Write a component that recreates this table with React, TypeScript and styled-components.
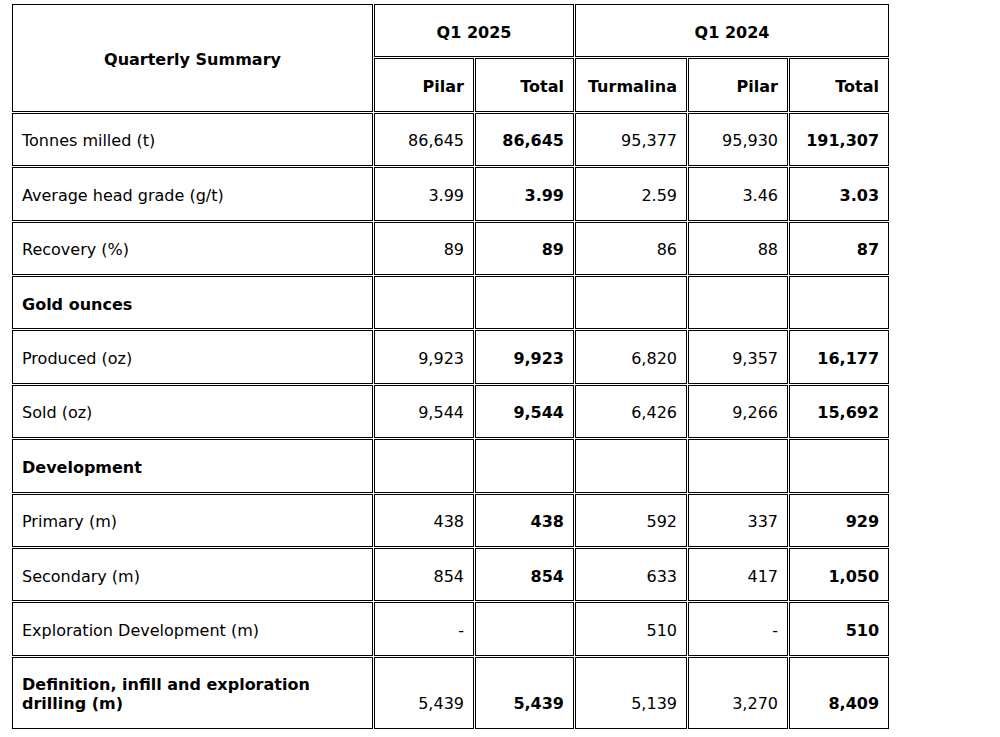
import React from "react";
import styled, { createGlobalStyle } from "styled-components";

type Row = {
  label: string;
  section?: boolean;
  values?: string[];
};

const rows: Row[] = [
  { label: "Tonnes milled (t)", values: ["86,645", "86,645", "95,377", "95,930", "191,307"] },
  { label: "Average head grade (g/t)", values: ["3.99", "3.99", "2.59", "3.46", "3.03"] },
  { label: "Recovery (%)", values: ["89", "89", "86", "88", "87"] },
  { label: "Gold ounces", section: true },
  { label: "Produced (oz)", values: ["9,923", "9,923", "6,820", "9,357", "16,177"] },
  { label: "Sold (oz)", values: ["9,544", "9,544", "6,426", "9,266", "15,692"] },
  { label: "Development", section: true },
  { label: "Primary (m)", values: ["438", "438", "592", "337", "929"] },
  { label: "Secondary (m)", values: ["854", "854", "633", "417", "1,050"] },
  { label: "Exploration Development (m)", values: ["-", "", "510", "-", "510"] },
  {
    label: "Definition, infill and exploration drilling (m)",
    section: true,
    values: ["5,439", "5,439", "5,139", "3,270", "8,409"],
  },
];

// total columns are bold
const boldCols = [false, true, false, false, true];
const colWidths = [361, 100, 99, 112, 100, 100];

const App: React.FC = () => {
  return (
    <>
      <GlobalStyle />
      <Page>
        <Table>
          <colgroup>
            {colWidths.map((w, i) => (
              <col key={i} style={{ width: w }} />
            ))}
          </colgroup>
          <thead>
            <tr>
              <HeadCell rowSpan={2} $align="center">
                Quarterly Summary
              </HeadCell>
              <HeadCell colSpan={2} $align="center">
                Q1 2025
              </HeadCell>
              <HeadCell colSpan={3} $align="center">
                Q1 2024
              </HeadCell>
            </tr>
            <tr>
              <HeadCell $align="right">Pilar</HeadCell>
              <HeadCell $align="right">Total</HeadCell>
              <HeadCell $align="right">Turmalina</HeadCell>
              <HeadCell $align="right">Pilar</HeadCell>
              <HeadCell $align="right">Total</HeadCell>
            </tr>
          </thead>
          <tbody>
            {rows.map((r) => (
              <tr key={r.label}>
                <LabelCell $bold={!!r.section}>{r.label}</LabelCell>
                {(r.values ?? ["", "", "", "", ""]).map((v, i) => (
                  <NumCell key={i} $bold={boldCols[i]}>
                    {v}
                  </NumCell>
                ))}
              </tr>
            ))}
          </tbody>
        </Table>
      </Page>
    </>
  );
};

export default App;

const GlobalStyle = createGlobalStyle`
  body {
    margin: 0;
    background: #ffffff;
    font-family: "DejaVu Sans", Verdana, sans-serif;
    color: #000000;
  }
`;

const Page = styled.div`
  padding: 3px 0 0 11px;
`;

const Table = styled.table`
  table-layout: fixed;
  width: 879px;
  border-collapse: separate;
  border-spacing: 1px;
  font-size: 16px;
  line-height: 19px;
`;

const Cell = styled.td`
  box-sizing: border-box;
  border: 1px solid #000000;
  padding: 17.6px 9px 14.8px;
`;

const HeadCell = styled(Cell).attrs({ as: "th" })<{ $align: string }>`
  font-weight: bold;
  text-align: ${(p) => p.$align};
  vertical-align: middle;
`;

const LabelCell = styled(Cell)<{ $bold: boolean }>`
  text-align: left;
  vertical-align: middle;
  font-weight: ${(p) => (p.$bold ? "bold" : "normal")};
  padding-right: 40px;
`;

const NumCell = styled(Cell)<{ $bold: boolean }>`
  text-align: right;
  vertical-align: bottom;
  font-weight: ${(p) => (p.$bold ? "bold" : "normal")};
`;
